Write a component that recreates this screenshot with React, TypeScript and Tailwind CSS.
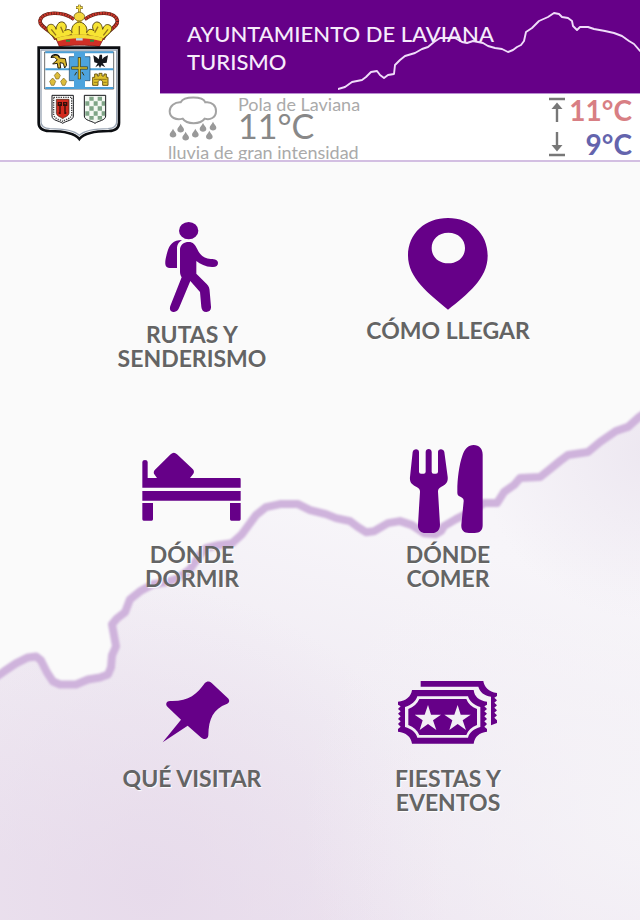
import type { ReactNode } from "react";

const PURPLE = "#660088";

function Crest() {
  return (
    <svg viewBox="0 0 300 435" className="h-[145px] w-[100px]" role="img" aria-label="Escudo de Laviana">
      {/* crown */}
      <path d="M78 126 C72 104 60 92 46 84 C26 70 28 44 52 36 C78 28 108 32 130 46 H166 C188 32 216 28 240 36 C266 46 270 70 250 84 C236 92 226 106 222 124 Z" fill="#fff" />
      <path d="M78 118 C66 88 28 84 30 62 C36 34 98 32 132 58 M218 118 C230 88 264 84 262 62 C256 34 198 32 164 58" fill="none" stroke="#5b1f16" strokeWidth="11" />
      <path d="M78 118 C66 88 28 84 30 62 C36 34 98 32 132 58 M218 118 C230 88 264 84 262 62 C256 34 198 32 164 58" fill="none" stroke="#c9382c" strokeWidth="8" strokeDasharray="6 2" />
      <path d="M148 46 V96" stroke="#f2d23c" strokeWidth="14" />
      <path d="M148 14 V36 M138 23 H158" stroke="#5a4410" strokeWidth="8" />
      <path d="M148 15 V35 M139 23 H157" stroke="#f5df4a" strokeWidth="5" />
      <ellipse cx="148" cy="50" rx="16" ry="13" fill="#f3d83e" stroke="#59430f" strokeWidth="2" />
      <path d="M68 108 C52 98 44 80 58 74 C68 70 76 78 78 88 C80 74 86 64 98 66 C110 70 112 84 104 92 C114 86 122 88 126 98 C122 82 132 68 148 66 C164 68 174 82 170 98 C174 86 184 86 192 92 C184 82 188 68 200 66 C212 66 216 76 218 88 C222 76 230 70 240 76 C252 84 242 100 226 110 L216 122 C170 110 126 110 82 122 Z" fill="#f7e432" stroke="#5c4a12" strokeWidth="3" />
      <path d="M92 80 L100 98 M204 80 L194 98 M148 78 V104 M126 102 L112 110 M170 102 L184 110 M64 88 L78 106 M234 88 L220 106" stroke="#94751a" strokeWidth="4" />
      <path d="M78 116 C120 102 176 102 220 116 L208 140 C170 134 126 134 88 140 Z" fill="#cf2f26" stroke="#6b1711" strokeWidth="2" />
      <path d="M80 114 C122 101 174 101 218 114 L215 124 C174 112 122 112 83 124 Z" fill="#f2dc35" />
      <path d="M108 122 h12 M180 122 h12" stroke="#2c8a43" strokeWidth="6" />
      <path d="M138 118 h20" stroke="#b6dcec" strokeWidth="7" />

      {/* shield */}
      <path d="M26 143 H267 V368 C267 386 256 392 236 393 C196 393 164 397 148 417 C132 397 98 393 58 393 C38 392 26 386 26 368 Z" fill="#fff" stroke="#0c0e12" strokeWidth="8" />
      <path d="M33 150 H260 V366 C260 380 250 385 234 386 C196 386 164 391 148 406 C132 391 98 386 60 386 C43 385 33 380 33 366 Z" fill="none" stroke="#9aa5b4" strokeWidth="4" />
      <path d="M44 156 H251 V267 H44 Z" fill="#fff" stroke="#222" strokeWidth="2" />
      <path d="M46 157 H250 M46 208 H250 M46 264 H250" stroke="#4b9fd6" strokeWidth="6" />
      <path d="M118 170 H180 V242 H118 Z" fill="#4da3dd" stroke="#1c4262" strokeWidth="2" />
      <path d="M132 156 H165 V267 H132 Z" fill="#4da3dd" />
      <path d="M148 172 V238 M124 204 H173" stroke="#3b3510" strokeWidth="9" />
      <path d="M148 174 V236 M126 204 H171" stroke="#d8c12b" strokeWidth="5" />
      <path d="M134 226 L140 216 M162 226 L156 216" stroke="#3b3510" strokeWidth="3" />
      {/* goat */}
      <path d="M66 172 C72 162 88 164 88 174 L106 176 L110 196 L104 204 L100 190 L90 188 L92 204 L84 204 L82 190 L68 192 L76 184 L82 180 L74 172 Z" fill="#d8b62d" stroke="#2a220c" strokeWidth="3" />
      <path d="M64 174 C64 162 84 160 88 172" fill="none" stroke="#15120a" strokeWidth="4" />
      {/* eagle */}
      <path d="M190 166 L200 172 L206 178 L209 164 L216 164 L217 178 L222 172 L234 166 L230 188 L218 190 L226 202 L214 196 L210 204 L206 196 L196 202 L203 190 L193 187 Z" fill="#15171c" />
      {/* fleurs */}
      <path d="M82 216 L91 226 L86 237 H78 L73 226 Z M68 234 L77 244 L72 256 H64 L59 244 Z M101 234 L110 244 L105 256 H97 L92 244 Z" fill="#ddbd3b" stroke="#7c651b" strokeWidth="2" />
      {/* castle */}
      <path d="M188 256 V232 H194 V222 H202 V228 H207 V220 H216 V228 H222 V222 H229 V232 H234 V256 H218 V246 C216 238 206 238 204 246 V256 Z" fill="#e0c22c" stroke="#6d5815" strokeWidth="3" />
      <path d="M192 238 h38 M192 247 h10 M220 247 h10" stroke="#6d5815" strokeWidth="2" />
      {/* lower shields */}
      <path d="M66 286 H130 V348 C130 362 108 362 98 370 C88 362 66 362 66 348 Z" fill="#fff" stroke="#16171b" strokeWidth="3" />
      <path d="M71 292 H125 V346 C120 358 106 358 98 364 C90 358 76 358 71 346 Z" fill="none" stroke="#444" strokeWidth="4" strokeDasharray="4 3" />
      <path d="M79 298 H117 V340 C115 350 104 350 98 356 C92 350 81 350 79 340 Z" fill="#d32a1e" stroke="#3a2310" strokeWidth="2" />
      <path d="M90 312 V342 M105 312 V342 M85 308 h9 v8 h-9 Z M101 308 h9 v8 h-9 Z M86 339 h6 M103 339 h6" fill="none" stroke="#34100a" strokeWidth="4" />
      <path d="M163 286 H227 V348 C227 362 205 362 195 370 C185 362 163 362 163 348 Z" fill="#f4f8f3" stroke="#16171b" strokeWidth="3" />
      <path d="M178 290 h13 v12 h-13 Z M203 290 h13 v12 h-13 Z M166 304 h12 v13 h-12 Z M191 304 h12 v13 h-12 Z M215 304 h10 v13 h-10 Z M178 319 h13 v13 h-13 Z M203 319 h13 v13 h-13 Z M166 334 h12 v13 h-12 Z M191 334 h12 v13 h-12 Z M215 334 h10 v13 h-10 Z M178 348 h13 v11 h-13 Z M203 348 h13 v11 h-13 Z" fill="#7fa587" />
    </svg>
  );
}

function BannerRidge() {
  return (
    <svg viewBox="338 0 302 93" className="absolute top-0 right-0 h-full w-[302px]" aria-hidden="true">
      <path
        d="M338 89 L345 87 L352 82 L362 80 L366 77 L371 72 L377 71 L380 75 L384 78 L388 75 L394 74 L395 65 L400 60 L405 56 L415 53 L422 49 L428 47 L434 42 L440 38 L455 38 L462 42 L467 43 L473 41 L483 43 L488 46 L495 48 L502 49 L508 52 L513 50 L517 47 L521 45 L524 41 L526 32 L532 28 L539 21 L548 17 L554 13 L559 14 L562 17 L568 18 L572 21 L573 26 L577 30 L580 27 L588 27 L594 29 L605 31 L614 33 L622 36 L629 41 L634 44 L640 51"
        fill="none"
        stroke="#f0ddfa"
        strokeWidth="1.9"
        strokeLinejoin="round"
        strokeLinecap="round"
      />
    </svg>
  );
}

function RainIcon() {
  const drops = [
    [39, 401],
    [62, 386],
    [77, 410],
    [106, 401],
    [129, 384],
    [148, 407],
    [159, 380],
  ];
  return (
    <svg viewBox="24 288 150 138" className="h-[46px] w-[50px] shrink-0" aria-hidden="true">
      <path
        d="M62 307 C72 288 128 288 136 307 C156 304 169 318 168 334 C168 353 150 361 134 356 C122 374 80 374 68 356 C48 362 29 352 29 334 C29 318 44 306 62 307 Z"
        fill="none"
        stroke="#a3a3a3"
        strokeWidth="6"
      />
      {drops.map(([x, y]) => (
        <path
          key={x}
          transform={`translate(${x} ${y})`}
          d="M0 -15 C3 -7 10 -3 10 3 C10 14 -10 14 -10 3 C-10 -3 -3 -7 0 -15 Z"
          fill="#999"
        />
      ))}
    </svg>
  );
}

function LimitArrow({ down = false }: { down?: boolean }) {
  return (
    <svg viewBox="0 0 16 26" className={down ? "h-[26px] w-4 rotate-180" : "h-[26px] w-4"} aria-hidden="true">
      <path d="M0 2 H16 M8 8 V25" stroke="#777" strokeWidth="2.4" fill="none" />
      <path d="M8 5.5 L13.5 12 H2.5 Z" fill="#777" />
    </svg>
  );
}

function Mountains() {
  const ridge =
    "M-6 677 L4 670 L16 662 L28 656 L36 655 L41 659 L47 671 L53 680 L60 683 L76 683 L88 678 L100 676 L108 673 L111 666 L112 654 L116 645 L114 634 L112 623 L117 617 L125 611 L130 598 L140 590 L153 583 L166 581 L178 577 L190 568 L199 555 L206 547 L218 544 L232 542 L242 533 L256 514 L266 506 L280 503 L298 503 L310 509 L326 513 L336 517 L350 520 L358 526 L366 531 L374 530 L388 522 L400 520 L412 524 L424 532 L436 533 L441 530 L444 525 L456 518 L472 510 L484 502 L497 502 L504 491 L514 484 L520 477 L540 476 L550 468 L560 460 L568 454 L588 451 L600 441 L616 430 L628 426 L638 417 L648 410";
  return (
    <svg
      viewBox="0 0 640 920"
      preserveAspectRatio="none"
      className="pointer-events-none absolute inset-0 h-full w-full"
      aria-hidden="true"
    >
      <defs>
        <linearGradient id="slope" gradientUnits="userSpaceOnUse" x1="360" y1="520" x2="260" y2="920">
          <stop offset="0" stopColor="#f7f5f9" />
          <stop offset="0.5" stopColor="#f0ebf3" />
          <stop offset="1" stopColor="#ece3ef" />
        </linearGradient>
        <radialGradient id="valley" gradientUnits="userSpaceOnUse" cx="150" cy="885" r="300">
          <stop offset="0" stopColor="#e6d9ea" stopOpacity="0.8" />
          <stop offset="1" stopColor="#e6d9ea" stopOpacity="0" />
        </radialGradient>
        <radialGradient id="glow" gradientUnits="userSpaceOnUse" cx="640" cy="820" r="340">
          <stop offset="0" stopColor="#f6f4f8" stopOpacity="0.85" />
          <stop offset="1" stopColor="#f6f4f8" stopOpacity="0" />
        </radialGradient>
        <radialGradient id="dusk" gradientUnits="userSpaceOnUse" cx="650" cy="450" r="170">
          <stop offset="0" stopColor="#ece6f0" stopOpacity="0.9" />
          <stop offset="1" stopColor="#ece6f0" stopOpacity="0" />
        </radialGradient>
        <filter id="soft">
          <feGaussianBlur stdDeviation="0.9" />
        </filter>
      </defs>
      <path d={`${ridge} V930 H-6 Z`} fill="url(#slope)" />
      <path d={`${ridge} V930 H-6 Z`} fill="url(#valley)" />
      <path d={`${ridge} V930 H-6 Z`} fill="url(#glow)" />
      <path d={`${ridge} V930 H-6 Z`} fill="url(#dusk)" />
      <path d={ridge} fill="none" stroke="#cfb3dc" strokeWidth="8" strokeLinejoin="round" filter="url(#soft)" />
    </svg>
  );
}

function HikerIcon() {
  return (
    <svg viewBox="126 24 300 312" className="h-[104px] w-[100px]" fill={PURPLE} aria-hidden="true">
      <ellipse cx="266" cy="62" rx="29" ry="26" />
      <path d="M246 90 C220 90 208 104 202 126 C197 144 195 154 196 163 C197 171 202 174 209 174 H231 V112 C232 102 238 95 246 90 Z" />
      <path d="M240 117 C242 103 252 96 266 96 C279 96 286 104 292 118 C300 136 313 146 332 147 C346 147 354 151 354 159 C354 168 347 172 336 171 C316 170 301 163 289 153 V191 L320 222 C327 229 329 236 329 244 L333 290 C334 300 328 306 319 306 C310 306 305 300 304 291 L300 246 L271 213 L238 292 C234 303 226 308 217 305 C209 302 208 294 212 285 L245 202 C241 196 240 191 240 184 Z" />
    </svg>
  );
}

function PlaceIcon() {
  return (
    <svg viewBox="144 24 300 300" className="size-[100px]" fill={PURPLE} aria-hidden="true">
      <path
        fillRule="evenodd"
        d="M294 24 C362 24 413 70 413 137 C413 206 352 252 294 299 C238 252 174 204 174 137 C174 70 226 24 294 24 Z M295 68 C265 68 245 88 245 114 C245 140 265 160 295 160 C325 160 345 140 345 114 C345 88 325 68 295 68 Z"
      />
    </svg>
  );
}

function BedIcon() {
  return (
    <svg viewBox="36 6 300 300" className="size-[100px]" fill={PURPLE} aria-hidden="true">
      <path d="M37 66 Q37 60 45 60 Q53 60 53 66 V114 H81 L73 103 C70 98 71 93 75 89 L122 43 C128 37 135 37 141 43 L188 87 C193 92 193 98 189 103 L180 114 H328 C331 114 332 115 332 118 V143 H37 Z" />
      <path d="M37 153 H332 V182 H37 Z M37 189 H69 V238 Q69 242 65 242 H41 Q37 242 37 238 Z M300 189 H332 V238 Q332 242 328 242 H304 Q300 242 300 238 Z" />
    </svg>
  );
}

function CutleryIcon() {
  return (
    <svg viewBox="54 21 300 300" className="size-[100px]" fill={PURPLE} aria-hidden="true">
      <path d="M98 51 C100 40 117 40 117 51 V110 Q117 116 123 116 H131 Q137 116 137 110 V51 C137 39 155 39 155 51 V110 Q155 116 161 116 H168 Q174 116 174 110 V51 C174 40 191 40 193 51 L203 125 C205 143 195 149 183 156 C176 160 174 164 174 170 L180 269 C180 285 170 294 157 294 H137 C122 294 113 284 114 269 L120 170 C120 163 117 160 110 156 C97 149 88 143 90 126 Z" />
      <path d="M281 30 C298 30 308 42 308 59 V271 C308 287 299 294 284 294 H267 C251 294 243 286 244 269 L251 199 C252 190 245 188 238 184 C231 180 232 173 232 165 C232 133 237 90 247 62 C254 41 265 30 281 30 Z" />
    </svg>
  );
}

function PushpinIcon() {
  return (
    <svg viewBox="96 -12 300 300" className="size-[100px]" fill={PURPLE} aria-hidden="true">
      <path d="M284 40 C291 33 298 33 305 39 L353 84 C360 91 359 98 350 102 C310 117 296 146 295 196 C294 209 282 210 274 203 L233 167 L158 217 L213 149 L173 111 C165 103 169 93 180 93 C234 95 261 74 284 40 Z" />
    </svg>
  );
}

function TicketsIcon() {
  return (
    <svg viewBox="54 -12 300 300" className="size-[100px] overflow-visible" fill={PURPLE} aria-hidden="true">
      <path d="M122 33 H310 C312 50 326 66 351 69 V78 L343 83 L351 91 L343 98 L351 106 L343 113 L351 121 L343 128 L351 136 L343 143 L351 151 V159 L333 166 V80 C312 77 300 66 295 50 H122 Z" />
      <path
        fillRule="evenodd"
        d="M96 60 H281 C283 80 297 92 321 95 V104 L313 109 L321 117 L313 124 L321 131 L313 139 L321 147 L313 154 L321 162 L313 170 L321 177 V185 C298 187 284 200 281 221 H96 C93 200 78 187 54 185 V177 L62 170 L54 162 L62 154 L54 147 L62 139 L54 131 L62 124 L54 117 L62 109 L54 104 V95 C78 93 93 80 96 60 Z M112 79 C108 93 94 106 75 111 V171 C94 176 108 188 112 203 H264 C268 188 282 176 301 171 V111 C282 106 268 93 264 79 Z"
      />
      <path
        fillRule="evenodd"
        d="M118 87 H259 C264 101 275 111 291 117 V165 C275 171 264 181 259 195 H118 C112 181 101 171 85 165 V117 C101 111 112 101 118 87 Z M144 105 L134 134 H104 L128 151 L119 180 L144 162 L169 180 L159 151 L183 134 H153 Z M233 105 L223 134 H193 L217 151 L208 180 L233 162 L258 180 L248 151 L272 134 H242 Z"
      />
    </svg>
  );
}

function Tile({ icon, lines }: { icon: ReactNode; lines: string[] }) {
  return (
    <button type="button" className="flex min-h-56 cursor-pointer flex-col items-center">
      {icon}
      <span className="text-[23px] leading-6 font-bold text-[#646464] [text-shadow:1px_1px_1px_#fff]">
        {lines.map((line) => (
          <span key={line} className="block">
            {line}
          </span>
        ))}
      </span>
    </button>
  );
}

export default function App() {
  return (
    <div className="relative min-h-screen bg-[#fafafa] font-[Lato,sans-serif]">
      <Mountains />
      <header className="relative flex border-b-2 border-[#d3bfe2] bg-white">
        <div className="flex w-40 shrink-0 justify-center">
          <Crest />
        </div>
        <div className="min-w-0 grow">
          <div className="relative border-b border-[#b98fd0] bg-[#660088] pt-5 pb-[17px] pl-[27px]">
            <BannerRidge />
            <h1 className="relative text-[22px] leading-7 font-medium text-[#f6ecfb]">
              AYUNTAMIENTO DE LAVIANA
              <br />
              TURISMO
            </h1>
          </div>
          <section className="flex h-[66px] justify-between px-2" aria-label="El tiempo">
            <div>
              <div className="flex h-12 gap-5 pt-[2px]">
                <RainIcon />
                <div>
                  <p className="text-[18px] leading-4 text-[#aaa]">Pola de Laviana</p>
                  <p className="text-[34px] leading-7 text-[#888]">11°C</p>
                </div>
              </div>
              <p className="h-[18px] overflow-hidden text-[18px] leading-5 text-[#aaa]">lluvia de gran intensidad</p>
            </div>
            <div className="flex flex-col gap-[2px] text-[28px] leading-8 font-bold">
              <p className="flex items-center justify-between gap-1 text-[#d87f84]">
                <LimitArrow />
                11°C
              </p>
              <p className="flex items-center justify-between gap-1 text-[#6464ad]">
                <LimitArrow down />
                9°C
              </p>
            </div>
          </section>
        </div>
      </header>
      <main className="relative grid grid-cols-2 px-16 pt-14 pb-8">
        <Tile icon={<HikerIcon />} lines={["RUTAS Y", "SENDERISMO"]} />
        <Tile icon={<PlaceIcon />} lines={["CÓMO LLEGAR"]} />
        <Tile icon={<BedIcon />} lines={["DÓNDE", "DORMIR"]} />
        <Tile icon={<CutleryIcon />} lines={["DÓNDE", "COMER"]} />
        <Tile icon={<PushpinIcon />} lines={["QUÉ VISITAR"]} />
        <Tile icon={<TicketsIcon />} lines={["FIESTAS Y", "EVENTOS"]} />
      </main>
    </div>
  );
}
